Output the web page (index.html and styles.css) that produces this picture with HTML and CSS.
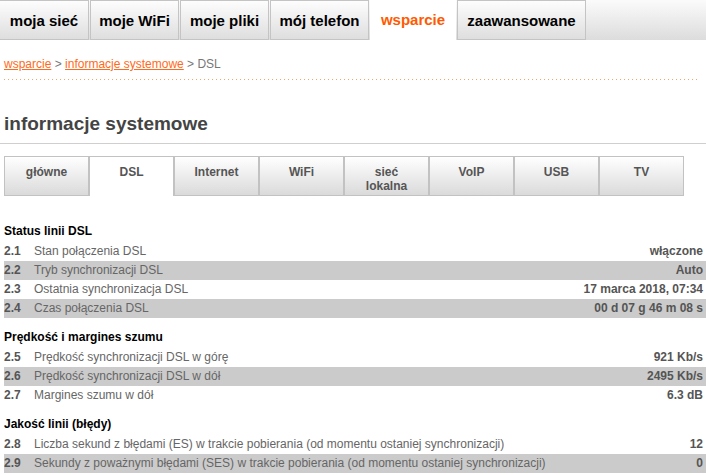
FILE: index.html
```html
<!DOCTYPE html>
<html>
<head>
    <title>wsparcie - informacje systemowe - DSL</title>
    <link rel="stylesheet" href="styles.css">
</head>
<body>
    <nav class="topnav">
        <a class="topnav-item first" style="width: 89px">moja sieć</a>
        <a class="topnav-item" style="width: 89px">moje WiFi</a>
        <a class="topnav-item" style="width: 89px">moje pliki</a>
        <a class="topnav-item" style="width: 99px">mój telefon</a>
        <a class="topnav-item active" style="width: 86px">wsparcie</a>
        <a class="topnav-item" style="width: 129px">zaawansowane</a>
    </nav>

    <div class="breadcrumb">
        <a href="#">wsparcie</a> &gt; <a href="#">informacje systemowe</a> &gt; DSL
    </div>

    <h1 class="page-title">informacje systemowe</h1>

    <div class="subtabs">
        <a class="subtab">główne</a>
        <a class="subtab active">DSL</a>
        <a class="subtab">Internet</a>
        <a class="subtab">WiFi</a>
        <a class="subtab">sieć<br>lokalna</a>
        <a class="subtab">VoIP</a>
        <a class="subtab">USB</a>
        <a class="subtab">TV</a>
    </div>

    <div class="section">
        <h2>Status linii DSL</h2>
        <div class="row"><span class="num">2.1</span><span class="label">Stan połączenia DSL</span><span class="value">włączone</span></div>
        <div class="row alt"><span class="num">2.2</span><span class="label">Tryb synchronizacji DSL</span><span class="value">Auto</span></div>
        <div class="row"><span class="num">2.3</span><span class="label">Ostatnia synchronizacja DSL</span><span class="value">17 marca 2018, 07:34</span></div>
        <div class="row alt"><span class="num">2.4</span><span class="label">Czas połączenia DSL</span><span class="value">00 d 07 g 46 m 08 s</span></div>
    </div>

    <div class="section">
        <h2>Prędkość i margines szumu</h2>
        <div class="row"><span class="num">2.5</span><span class="label">Prędkość synchronizacji DSL w górę</span><span class="value">921 Kb/s</span></div>
        <div class="row alt"><span class="num">2.6</span><span class="label">Prędkość synchronizacji DSL w dół</span><span class="value">2495 Kb/s</span></div>
        <div class="row"><span class="num">2.7</span><span class="label">Margines szumu w dół</span><span class="value">6.3 dB</span></div>
    </div>

    <div class="section">
        <h2>Jakość linii (błędy)</h2>
        <div class="row"><span class="num">2.8</span><span class="label">Liczba sekund z błędami (ES) w trakcie pobierania (od momentu ostaniej synchronizacji)</span><span class="value">12</span></div>
        <div class="row alt"><span class="num">2.9</span><span class="label">Sekundy z poważnymi błędami (SES) w trakcie pobierania (od momentu ostaniej synchronizacji)</span><span class="value">0</span></div>
    </div>
</body>
</html>
```

FILE: styles.css
```css
body {
    margin: 0;
    font-family: "Liberation Sans", Arial, sans-serif;
    font-size: 12px;
    color: #555;
    background-color: #fff;
}

/* top menu */
.topnav {
    display: flex;
    height: 40px;
    background: linear-gradient(to bottom, #fbfbfb, #dcdcdc);
}
.topnav-item {
    box-sizing: border-box;
    height: 40px;
    margin-left: 1px;
    border: 1px solid #c4c4c4;
    background: linear-gradient(to bottom, #fdfdfd, #dedede);
    color: #000;
    font-size: 15px;
    font-weight: bold;
    line-height: 40px;
    text-align: center;
    text-decoration: none;
}
.topnav-item.first {
    margin-left: 0;
    border-left: none;
}
.topnav-item.active {
    border: none;
    background: #fff;
    color: #ff5a00;
}

/* breadcrumb */
.breadcrumb {
    margin: 16px 6px 0 4px;
    padding-bottom: 8px;
    line-height: 16px;
    color: #777;
    background-image: linear-gradient(to right, #f7a46c 1px, transparent 1px);
    background-size: 4px 1px;
    background-repeat: repeat-x;
    background-position: left bottom;
}
.breadcrumb a {
    color: #ff6a1a;
}

.page-title {
    margin: 32px 0 0 0;
    padding: 0 4px 7px;
    border-bottom: 1px solid #cfcfcf;
    font-size: 19px;
    line-height: 24px;
    color: #444;
}

/* sub tabs */
.subtabs {
    display: flex;
    margin: 12px 0 26px 4px;
}
.subtab {
    box-sizing: border-box;
    width: 85px;
    height: 40px;
    padding-top: 8px;
    border: 1px solid #c2c2c2;
    background: linear-gradient(to bottom, #ffffff, #dadada);
    color: #555;
    font-weight: bold;
    line-height: 14px;
    text-align: center;
}
.subtab.active {
    border-bottom: none;
    background: #fff;
}

/* data tables */
.section {
    margin-left: 4px;
}
.section h2 {
    margin: 10px 0 1px 0;
    font-size: 12px;
    line-height: 19px;
    color: #000;
}
.row {
    display: flex;
    height: 19px;
    line-height: 19px;
    padding-right: 3px;
}
.row.alt {
    background-color: #cbcbcb;
}
.num {
    width: 30px;
    flex-shrink: 0;
    font-weight: bold;
    color: #555;
}
.label {
    flex: 1;
    color: #666;
}
.value {
    font-weight: bold;
    color: #555;
    text-align: right;
}
```
